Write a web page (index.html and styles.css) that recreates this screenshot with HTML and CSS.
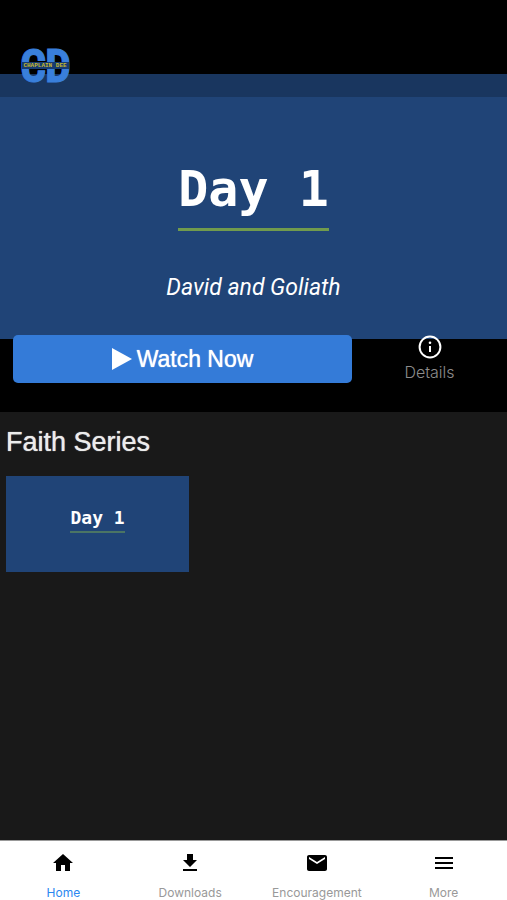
FILE: index.html
```html
<!DOCTYPE html>
<html lang="en">
<head>
<meta charset="utf-8">
<meta name="viewport" content="width=device-width, initial-scale=1">
<title>Home</title>
<link rel="stylesheet" href="styles.css">
</head>
<body>
<div class="app">
  <header class="topbar">
    <svg class="logo" viewBox="0 0 50 42" role="img" aria-label="CD logo">
      <text class="logo-letter" x="13" y="38">C</text>
      <text class="logo-letter" x="38" y="38">D</text>
      <rect x="2" y="18" width="47" height="7" fill="#173b70"/>
      <text class="logo-name" x="25" y="23">CHAPLAIN DEE</text>
    </svg>
  </header>
  <main class="content">
    <section class="hero">
      <div class="banner">
        <h1 class="banner-title">Day 1</h1>
        <p class="banner-subtitle">David and Goliath</p>
      </div>
      <div class="actions">
        <button class="watch" type="button">
          <svg class="play" viewBox="0 0 20 22" aria-hidden="true"><path d="M0 0L20 11L0 22Z" fill="currentColor"/></svg>
          Watch Now
        </button>
        <button class="details" type="button">
          <svg class="info" viewBox="0 0 24 24" aria-hidden="true"><circle cx="12" cy="12" r="10.4" fill="none" stroke="currentColor" stroke-width="2"/><circle cx="12" cy="7.8" r="1.3" fill="currentColor"/><path d="M12 11v6" stroke="currentColor" stroke-width="2"/></svg>
          Details
        </button>
      </div>
    </section>
    <section class="series">
      <h2 class="series-title">Faith Series</h2>
      <a class="card" href="#day-1"><span class="card-title">Day 1</span></a>
    </section>
  </main>
  <nav class="tabs">
    <a class="tab active" href="#home">
      <svg viewBox="0 0 24 24" aria-hidden="true"><path d="M10 20v-6h4v6h5v-8h3L12 3 2 12h3v8z"/></svg>
      Home
    </a>
    <a class="tab" href="#downloads">
      <svg viewBox="0 0 24 24" aria-hidden="true"><path d="M19 9h-4V3H9v6H5l7 7zM5 18v2h14v-2z"/></svg>
      Downloads
    </a>
    <a class="tab" href="#encouragement">
      <svg viewBox="0 0 24 24" aria-hidden="true"><path d="M20 4H4c-1.1 0-2 .9-2 2v12c0 1.100.9 2 2 2h16c1.100 0 2-.9 2-2V6c0-1.100-.9-2-2-2zm0 4l-8 5-8-5V6l8 5 8-5z"/></svg>
      Encouragement
    </a>
    <a class="tab" href="#more">
      <svg viewBox="0 0 24 24" aria-hidden="true"><path d="M3 18h18v-2H3zm0-5h18v-2H3zm0-7v2h18V6z"/></svg>
      More
    </a>
  </nav>
</div>
</body>
</html>
```
FILE: styles.css
```css
* { box-sizing: border-box; }

body {
  margin: 0;
  background: #191919;
  font-family: "Liberation Sans", sans-serif;
}

h1, h2, p { margin: 0; font-weight: 400; }

button { border: 0; padding: 0; font: inherit; cursor: pointer; }

a { text-decoration: none; }

.app {
  position: relative;
  display: flex;
  flex-direction: column;
  min-height: 100vh;
}

.topbar {
  position: absolute;
  top: 0;
  left: 0;
  right: 0;
  padding: 44px 20px 11px;
  background: rgba(0, 0, 0, 0.2);
}

.logo { display: block; width: 50px; height: 42px; overflow: visible; }

.logo-letter {
  font: 700 46px "Liberation Sans Narrow", "Roboto Condensed", "Liberation Sans", sans-serif;
  text-anchor: middle;
  fill: #397fdb;
  stroke: #397fdb;
  stroke-width: 1;
}

.logo-name {
  font: 700 6px "Liberation Mono", monospace;
  text-anchor: middle;
  fill: #c6b831;
}

.content { flex: 1; }

.hero {
  padding: 74px 0 29px;
  background: #000;
}

.banner {
  display: flex;
  flex-direction: column;
  align-items: center;
  padding: 84px 16px 37px;
  background: #204477;
  color: #fff;
}

.banner-title {
  padding-bottom: 8px;
  font: 700 50px/62px "DejaVu Sans Mono", monospace;
  border-bottom: 3px solid #719b4d;
}

.banner-subtitle {
  margin-top: 43px;
  font: italic 400 23px/28px Roboto, sans-serif;
}

.actions {
  display: flex;
  margin-top: -4px;
  padding-left: 13px;
}

.watch {
  flex: 339;
  display: flex;
  align-items: center;
  justify-content: center;
  gap: 5px;
  height: 48px;
  border-radius: 5px;
  background: #347bd8;
  color: #fff;
  font: 400 23px/28px "Liberation Sans", sans-serif;
  text-shadow: 0 0 1px #fff;
}

.play { width: 20px; height: 22px; }

.details {
  flex: 155;
  display: flex;
  flex-direction: column;
  align-items: center;
  gap: 2px;
  background: none;
  color: #8c8c8c;
  font: 300 16px/22px Inter, sans-serif;
}

.info { width: 24px; height: 24px; color: #fff; }

.series { padding: 14px 6px; }

.series-title {
  color: #ececec;
  font: 400 27px/32px "Liberation Sans", sans-serif;
  text-shadow: 0 0 1px #ececec;
}

.card {
  display: flex;
  justify-content: center;
  align-items: flex-start;
  width: 37%;
  aspect-ratio: 183 / 96;
  margin-top: 18px;
  padding-top: 29px;
  background: #204477;
  color: #fff;
}

.card-title {
  font: 700 18px/26px "DejaVu Sans Mono", monospace;
  border-bottom: 2px solid #4b7564;
}

.tabs {
  display: grid;
  grid-template-columns: repeat(4, 1fr);
  height: 60px;
  padding-top: 10px;
  background: #fff;
  border-top: 1px solid #999;
}

.tab {
  display: flex;
  flex-direction: column;
  align-items: center;
  gap: 10px;
  color: #999;
  font: 400 12px/16px Inter, sans-serif;
}

.tab svg { width: 24px; height: 24px; fill: #000; }

.tab.active { color: #2b87f0; }
```
